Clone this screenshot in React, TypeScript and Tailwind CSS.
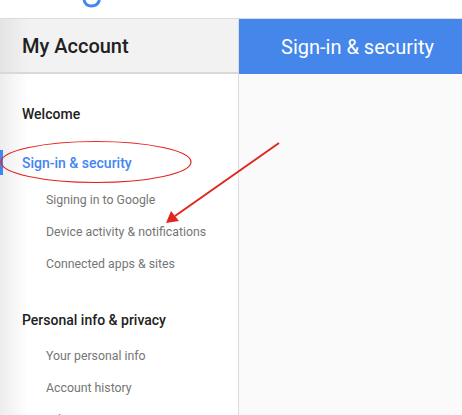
import React from 'react'

function SubItem({ label }: { label: string }) {
  return (
    <div className="h-[32px] shrink-0 pl-[46px] flex items-center text-[12.3px] text-[#757575]">
      {label}
    </div>
  )
}

function Annotation() {
  return (
    <svg
      className="absolute inset-0 pointer-events-none"
      width="462"
      height="415"
      viewBox="0 0 462 415"
    >
      <ellipse cx="96" cy="162" rx="95" ry="20.5" fill="none" stroke="#e0261f" strokeWidth="1.2" />
      <line x1="279" y1="143" x2="175" y2="216" stroke="#e0261f" strokeWidth="2" />
      <polygon points="166,223 171,211 179,221" fill="#e0261f" />
    </svg>
  )
}

export default function App() {
  return (
    <div
      className="relative w-[462px] h-[415px] overflow-hidden bg-white"
      style={{ fontFamily: 'Roboto, "Liberation Sans", sans-serif' }}
    >
      <div className="h-[19px] bg-white border-b border-[#dcdcdc] relative">
        <svg className="absolute left-[82px] top-0" width="20" height="8" viewBox="0 0 20 8">
          <path d="M2 0 C3 4.5 6.5 6 9.5 6 C13 6 16 4.5 17.5 0" fill="none" stroke="#4285f4" strokeWidth="3" />
        </svg>
      </div>
      <div className="flex h-[396px]">
        <div className="w-[239px] shrink-0 flex flex-col overflow-hidden border-r border-[#dedede] bg-gradient-to-r from-[#ededed] via-white via-[12%] to-white">
          <div className="h-[55px] shrink-0 flex items-center pl-[22px] text-[20px] font-medium text-[#212121] border-b-2 border-[#d9d9d9] bg-gradient-to-r from-[#e4e4e4] via-[#f2f2f2] via-[12%] to-[#f2f2f2]">
            My Account
          </div>
          <div className="pt-[30px] shrink-0">
            <div className="h-[20px] pl-[22px] flex items-center text-[14px] font-medium text-[#212121]">
              Welcome
            </div>
            <div className="mt-[26px] h-[25px] flex items-center">
              <div className="w-[3px] h-full bg-[#4285f4]" />
              <span className="pl-[19px] pt-[2px] text-[14px] font-medium text-[#4285f4]">
                Sign-in &amp; security
              </span>
            </div>
            <div className="mt-[9px]">
              <SubItem label="Signing in to Google" />
              <SubItem label="Device activity & notifications" />
              <SubItem label="Connected apps & sites" />
            </div>
            <div className="mt-[30px] h-[20px] pl-[22px] flex items-center text-[14px] font-medium text-[#212121]">
              Personal info &amp; privacy
            </div>
            <div className="mt-[10px]">
              <SubItem label="Your personal info" />
              <SubItem label="Account history" />
              <SubItem label="Ads settings" />
            </div>
          </div>
        </div>
        <div className="flex-1 flex flex-col bg-[#fafafa]">
          <div className="h-[55px] shrink-0 bg-[#4486ea] flex items-center pl-[42px] text-[20px] text-white">
            Sign-in &amp; security
          </div>
        </div>
      </div>
      <Annotation />
    </div>
  )
}
